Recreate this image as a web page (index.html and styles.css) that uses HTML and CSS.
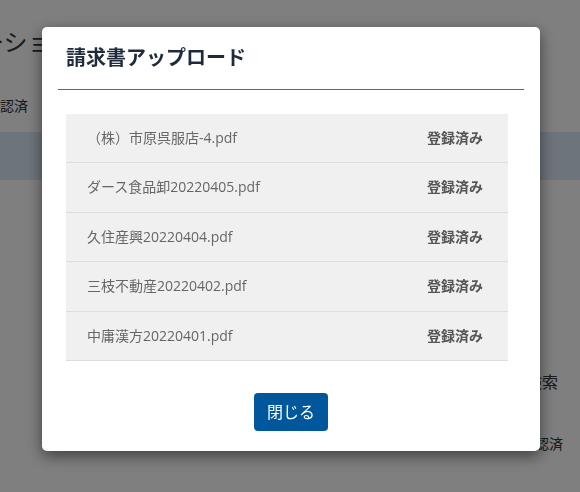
FILE: index.html
```html
<!DOCTYPE html>
<html lang="ja">
<head>
  <meta charset="UTF-8">
  <meta name="viewport" content="width=device-width, initial-scale=1.0">
  <title>請求書アップロード</title>
  <link rel="stylesheet" href="styles.css">
</head>
<body>
  <!-- Page behind the dialog -->
  <div class="page">
    <h2 class="page-title">ーション</h2>
    <p class="status-line">承認済</p>
    <div class="band"></div>
    <div class="side-search">検索</div>
    <div class="side-status">承認済</div>
  </div>

  <!-- Upload dialog -->
  <div class="overlay">
    <div class="modal">
      <div class="modal-header">
        <h3 class="modal-title">請求書アップロード</h3>
      </div>
      <div class="modal-body">
        <table class="file-table">
          <tbody>
            <tr><td class="file-name">（株）市原呉服店-4.pdf</td><td class="file-status">登録済み</td></tr>
            <tr><td class="file-name">ダース食品卸20220405.pdf</td><td class="file-status">登録済み</td></tr>
            <tr><td class="file-name">久住産興20220404.pdf</td><td class="file-status">登録済み</td></tr>
            <tr><td class="file-name">三枝不動産20220402.pdf</td><td class="file-status">登録済み</td></tr>
            <tr><td class="file-name">中庸漢方20220401.pdf</td><td class="file-status">登録済み</td></tr>
          </tbody>
        </table>
      </div>
      <div class="modal-footer">
        <button class="btn-close">閉じる</button>
      </div>
    </div>
  </div>
</body>
</html>
```

FILE: styles.css
```css
body {
  margin: 0;
  font-family: "Open Sans", "Noto Sans CJK JP", sans-serif;
  color: #333;
  background-color: #fff;
  overflow: hidden;
}

.page {
  height: 492px;
}

.page-title {
  margin: 0 0 0 -20px;
  padding-top: 30px;
  font-size: 24px;
  line-height: 24px;
  font-weight: normal;
  white-space: nowrap;
}

.status-line {
  margin: 42px 0 0 -14px;
  font-size: 14px;
  line-height: 20px;
}

.band {
  margin-top: 16px;
  height: 48px;
  background-color: #dce9f7;
}

.side-search {
  margin-top: 192px;
  padding-right: 22px;
  text-align: right;
  font-size: 16px;
  line-height: 20px;
}

.side-status {
  margin-top: 42px;
  padding-right: 17px;
  text-align: right;
  font-size: 14px;
  line-height: 20px;
}

.overlay {
  position: fixed;
  top: 0;
  left: 0;
  right: 0;
  bottom: 0;
  background-color: rgba(0, 0, 0, 0.5);
}

.modal {
  width: 498px;
  margin: 27px 0 0 42px;
  background-color: #fff;
  border-radius: 5px;
  box-shadow: 0 5px 15px rgba(0, 0, 0, 0.5);
}

.modal-header {
  margin: 0 16px;
  padding: 16px 8px;
  border-bottom: 1px solid #666;
}

.modal-title {
  margin: 0;
  font-size: 20px;
  line-height: 30px;
  font-weight: bold;
  color: #1f2b3a;
}

.modal-body {
  padding: 24px 32px 0 24px;
}

.file-table {
  width: 100%;
  border-collapse: collapse;
  background-color: #f0f0f0;
}

.file-table td {
  padding: 14px 0;
  font-size: 14px;
  line-height: 20.4px;
  border-bottom: 1px solid #dedede;
}

.file-name {
  padding-left: 21px !important;
  color: #666;
}

.file-status {
  padding-right: 25px !important;
  text-align: right;
  font-weight: bold;
  color: #555;
}

.modal-footer {
  padding: 32px 0 20px;
  text-align: center;
}

.btn-close {
  padding: 7px 13px;
  font-family: inherit;
  font-size: 16px;
  line-height: 24px;
  color: #fff;
  background-color: #01579b;
  border: none;
  border-radius: 4px;
}
```
